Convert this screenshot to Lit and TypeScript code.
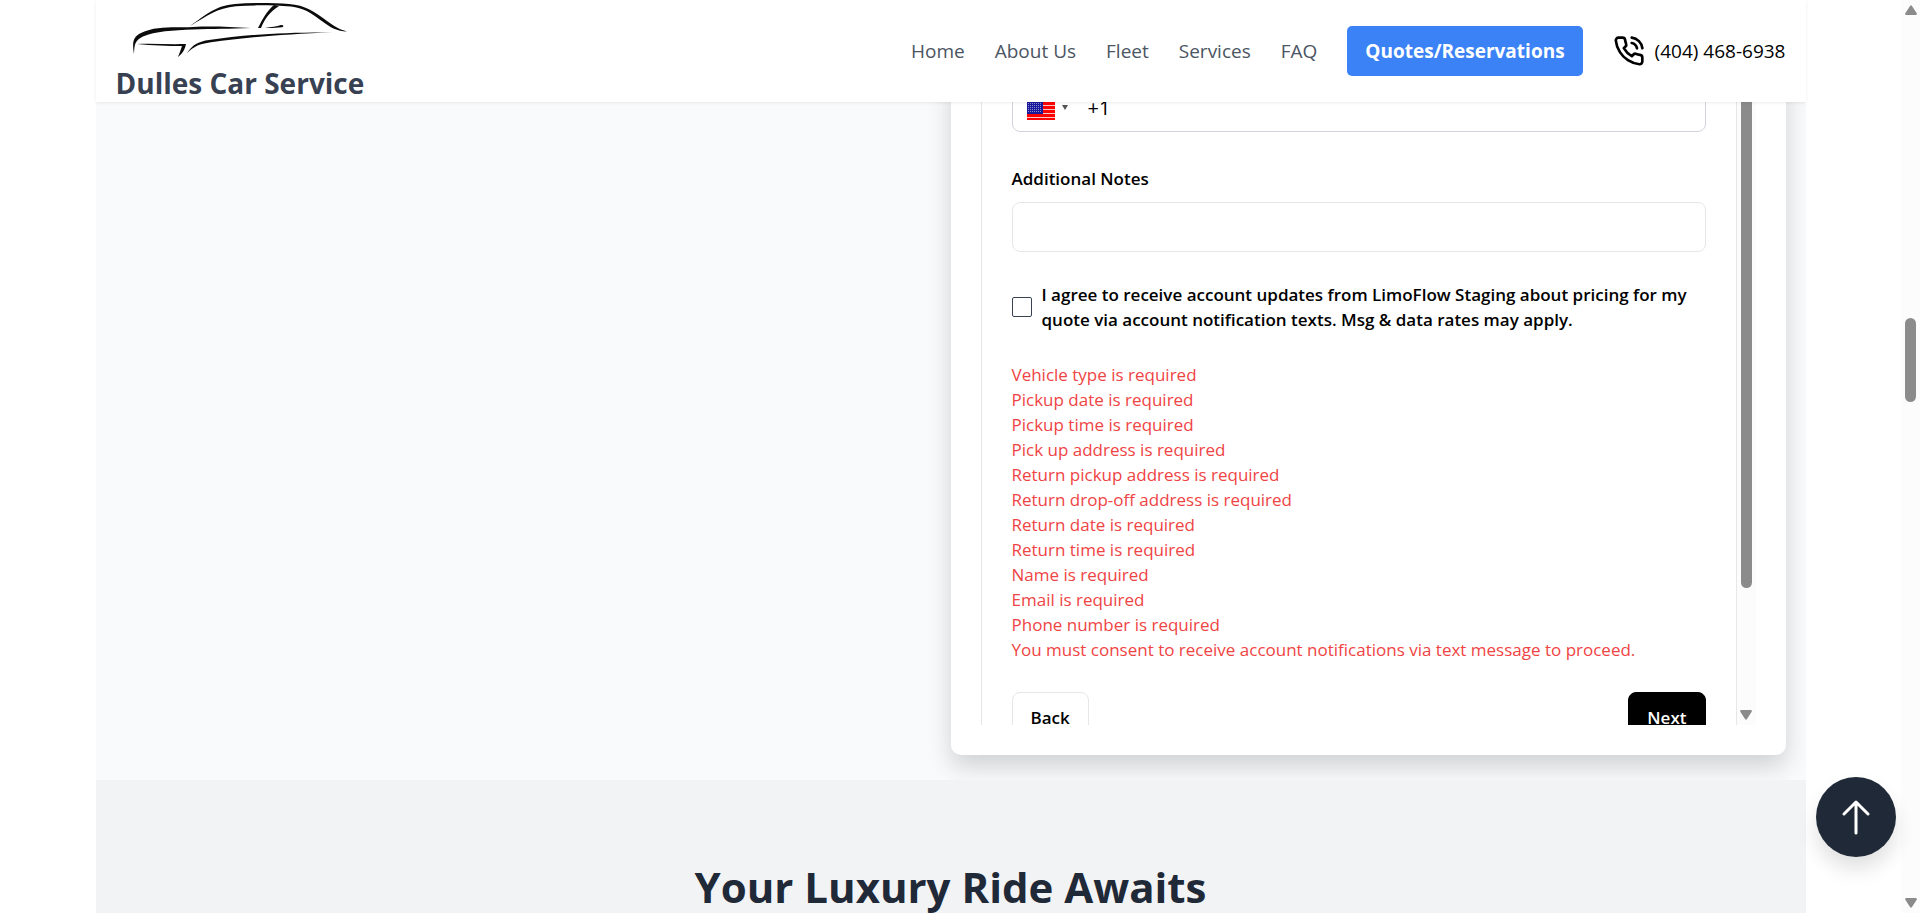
import { LitElement, html, css, svg } from "lit";
import { customElement } from "lit/decorators.js";

const NAV = ["Home", "About Us", "Fleet", "Services", "FAQ"];

const ERRORS = [
  "Vehicle type is required",
  "Pickup date is required",
  "Pickup time is required",
  "Pick up address is required",
  "Return pickup address is required",
  "Return drop-off address is required",
  "Return date is required",
  "Return time is required",
  "Name is required",
  "Email is required",
  "Phone number is required",
  "You must consent to receive account notifications via text message to proceed.",
];

const carLogo = html`<svg class="car" viewBox="0 0 216 56" role="img" aria-label="Car outline">
  <g fill="#0b0b0b">
    <path d="M1 51 C-1 39 0 34 8 30 C24 22 44 25 60 24 C80 23 96 24 118 25 C96 26 80 25.800 60 26.500 C40 27.500 22 28 10 33.500 C2 37.500 1.500 41 1 51Z" />
    <path d="M57 23 C74 11 82 3 102 1 C120 -0.500 140 0 156 1 C172 2 182 9 194 18 C202 24 206 26 214 28.500 C204 28 198 25 188 17.500 C178 9.500 170 5 158 3.500 C140 2.300 120 1.800 103 3.300 C84 5 74 13 57 23Z" />
    <path d="M125 25 C130 15 134 8 141 2 L146 3 C137 9 132 15 128 25Z" />
    <path d="M132 25 C138 24 144 23.500 148 22 C151 22 151 24 149 24.300 C144 25 138 25.100 132 25Z" />
    <path d="M54 50 C60 41 66 38.500 76 37 C110 32 150 29 200 29.500 C150 31 112 34.500 78 39.300 C66 41 62 43 54 50Z" />
    <path d="M4 41 C20 40.500 36 41.500 53 41 C52 46 50 50 45 54 C47 49 48 46 49 43 C34 43 20 42.500 4 41Z" />
  </g>
</svg>`;

const phoneIcon = html`<svg class="phone-icon" viewBox="0 0 24 24" fill="none" stroke="currentColor" stroke-width="2" stroke-linecap="round" stroke-linejoin="round" aria-hidden="true">
  <path d="M22 16.920v3a2 2 0 0 1-2.180 2 19.790 19.790 0 0 1-8.630-3.070 19.500 19.500 0 0 1-6-6 19.790 19.790 0 0 1-3.070-8.670A2 2 0 0 1 4.110 2h3a2 2 0 0 1 2 1.720 12.840 12.840 0 0 0 .7 2.810 2 2 0 0 1-.45 2.110L8.090 9.910a16 16 0 0 0 6 6l1.270-1.270a2 2 0 0 1 2.110-.45 12.840 12.840 0 0 0 2.810.7A2 2 0 0 1 22 16.920z" />
  <path d="M14.050 2a9 9 0 0 1 8 7.940" />
  <path d="M14.050 6A5 5 0 0 1 18 10" />
</svg>`;

const flag = html`<svg class="flag" viewBox="0 0 28 26" aria-hidden="true">
  <rect width="28" height="26" fill="#ffc4c4" />
  ${[0, 4, 8, 12, 16, 20, 24].map((y) => svg`<rect y=${y} width="28" height="3" fill="#f00" />`)}
  <rect width="16" height="20" fill="#1a1a9c" />
  ${[1, 3, 5, 7, 9, 11, 13, 15, 17].map((y) =>
    [1, 3, 5, 7, 9, 11, 13].map((x) => svg`<rect x=${x} y=${y} width="1" height="1" fill="#8c8cd0" />`)
  )}
</svg>`;

@customElement("app-root")
export class AppRoot extends LitElement {
  static styles = css`
    :host {
      display: flex;
      height: 100vh;
      overflow: hidden;
      background: #fff;
      color: #000;
      font-family: "Open Sans", "Noto Sans", sans-serif;
      font-size: 17px;
      line-height: 25px;
    }
    * { box-sizing: border-box; }
    a { color: inherit; text-decoration: none; }
    button, input { font: inherit; color: inherit; }
    .page { flex: 1; min-width: 0; overflow: hidden; }
    .container { width: 90%; max-width: 1710px; margin: 0 auto; }
    .header {
      position: relative;
      z-index: 2;
      height: 102px;
      padding: 0 20px;
      display: flex;
      justify-content: space-between;
      background: #fff;
      box-shadow: 0 1px 3px rgba(0, 0, 0, 0.08);
    }
    .brand {
      display: flex;
      flex-direction: column;
      font-size: 28px;
      line-height: 40px;
      font-weight: 700;
      color: #374151;
    }
    .car { width: 216px; height: 56px; margin: 3px 0 4px 17px; flex: none; }
    .nav { display: flex; align-items: center; gap: 30px; font-size: 19px; color: #4b5563; }
    .cta {
      height: 50px;
      padding: 0 18px;
      display: flex;
      align-items: center;
      border-radius: 5px;
      background: #3b82f6;
      color: #fff;
      font-weight: 700;
    }
    .call { display: flex; align-items: center; gap: 10px; color: #000; }
    .phone-icon { width: 32px; height: 32px; }
    .hero {
      margin-top: -50px;
      padding: 0 20px 25px;
      display: grid;
      grid-template-columns: 1fr 1fr;
      background: #f9fafc;
      overflow: hidden;
    }
    .card {
      grid-column: 2;
      padding: 30px;
      border-radius: 10px;
      background: #fff;
      box-shadow: 0 12px 25px rgba(0, 0, 0, 0.16);
    }
    .scroller { height: 643px; display: flex; overflow: hidden; }
    .form {
      flex: 1;
      padding: 0 30px;
      border: solid #e5e7eb;
      border-width: 0 1px;
      display: flex;
      flex-direction: column;
      gap: 30px;
      height: max-content;
    }
    .field { height: 50px; border: 1px solid #e5e7eb; border-radius: 8px; background: #fff; }
    .phone { flex: none; display: flex; align-items: center; border-color: #d1d5db; overflow: hidden; }
    .country { display: flex; align-items: center; gap: 7px; padding: 0 0 0 14px; border: 0; background: none; }
    .flag { width: 28px; height: 26px; }
    .caret { border: 3px solid transparent; border-top: 5px solid #555; border-bottom: 0; }
    .tel { flex: 1; min-width: 0; border: 0; padding: 0 20px; outline: none; font-size: 20px; }
    .group { display: flex; flex-direction: column; }
    .label { font-weight: 600; height: 40px; padding-top: 4px; }
    .consent { display: flex; align-items: center; gap: 10px; font-weight: 600; }
    .check {
      appearance: none;
      flex: none;
      width: 20px;
      height: 20px;
      margin: 0;
      border: 1px solid #374151;
      border-radius: 2px;
      background: #fff;
    }
    .errors { list-style: none; margin: 0; padding: 0; color: #ef4444; }
    .actions { display: flex; justify-content: space-between; }
    .btn { height: 50px; padding: 0 18px; border-radius: 8px; font-weight: 600; }
    .back { background: #fff; border: 1px solid #e5e7eb; }
    .next { background: #000; border: 1px solid #000; color: #fff; }
    .bar {
      flex: none;
      width: 19px;
      padding: 5px 4px;
      display: flex;
      flex-direction: column;
      align-items: center;
      background: #fcfcfc;
    }
    .thumb { width: 11px; border-radius: 6px; background: #8b8b8b; }
    .inner-thumb { height: 501px; }
    .page-thumb { height: 84px; margin-top: 303px; }
    .arrow { width: 12px; height: 10px; fill: #8b8b8b; flex: none; }
    .down { margin-top: auto; }
    .awaits { padding: 80px 20px; background: #f2f3f5; min-height: 400px; }
    .title {
      margin: 0;
      text-align: center;
      font-size: 42px;
      line-height: 54px;
      font-weight: 700;
      color: #1f2937;
    }
    .top {
      position: absolute;
      right: 24px;
      bottom: 56px;
      z-index: 3;
      width: 80px;
      height: 80px;
      padding: 0;
      border: 0;
      border-radius: 50%;
      display: grid;
      place-items: center;
      background: #1f2937;
      box-shadow: 0 12px 20px rgba(0, 0, 0, 0.12);
    }
    .top-icon { width: 28px; height: 36px; }
  `;

  render() {
    return html`
      <div class="page">
        <header class="header container">
          <a class="brand" href="#">${carLogo}<span>Dulles Car Service</span></a>
          <nav class="nav">
            ${NAV.map((n) => html`<a href="#">${n}</a>`)}
            <a class="cta" href="#">Quotes/Reservations</a>
            <a class="call" href="tel:4044686938">${phoneIcon}<span>(404) 468-6938</span></a>
          </nav>
        </header>
        <main>
          <section class="hero container">
            <div class="card">
              <div class="scroller">
                <form class="form">
                  <div class="field phone">
                    <button class="country" type="button" aria-label="Country">${flag}<span class="caret"></span></button>
                    <input class="tel" type="tel" aria-label="Phone number" value="+1" />
                  </div>
                  <div class="group">
                    <label class="label" for="notes">Additional Notes</label>
                    <input class="field" id="notes" type="text" />
                  </div>
                  <div class="consent">
                    <input class="check" id="consent" type="checkbox" />
                    <label for="consent">I agree to receive account updates from LimoFlow Staging about pricing for my quote via account notification texts. Msg &amp; data rates may apply.</label>
                  </div>
                  <ul class="errors">${ERRORS.map((e) => html`<li>${e}</li>`)}</ul>
                  <div class="actions">
                    <button class="btn back" type="button">Back</button>
                    <button class="btn next" type="button">Next</button>
                  </div>
                </form>
                <div class="bar">
                  <div class="thumb inner-thumb"></div>
                  <svg class="arrow down" viewBox="0 0 12 10"><path d="M1 0H11Q12.500 0.500 11.500 2L7 9Q6 10.500 5 9L0.500 2Q-0.500 0.500 1 0Z" /></svg>
                </div>
              </div>
            </div>
          </section>
          <section class="awaits container"><h2 class="title">Your Luxury Ride Awaits</h2></section>
        </main>
      </div>
      <div class="bar">
        <svg class="arrow" viewBox="0 0 12 10"><path d="M1 10H11Q12.500 9.500 11.500 8L7 1Q6 -0.500 5 1L0.500 8Q-0.500 9.500 1 10Z" /></svg>
        <div class="thumb page-thumb"></div>
        <svg class="arrow down" viewBox="0 0 12 10"><path d="M1 0H11Q12.500 0.500 11.500 2L7 9Q6 10.500 5 9L0.500 2Q-0.500 0.500 1 0Z" /></svg>
      </div>
      <button class="top" aria-label="Back to top">
        <svg class="top-icon" viewBox="0 0 28 36" fill="none" stroke="#fff" stroke-width="3" stroke-linecap="round" stroke-linejoin="round"><path d="M14 34V3M2 15L14 3L26 15" /></svg>
      </button>
    `;
  }
}
